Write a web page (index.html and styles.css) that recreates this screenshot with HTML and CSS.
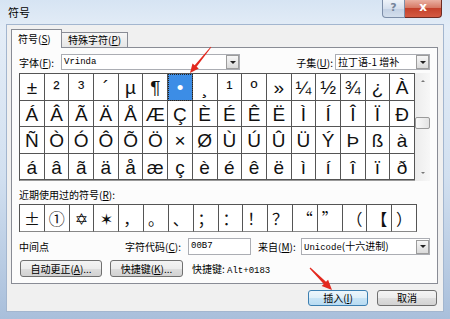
FILE: index.html
```html
<!DOCTYPE html>
<html>
<head>
  <meta charset="utf-8">
  <link rel="stylesheet" href="styles.css">
</head>
<body>
  <div class="window">
    <div class="titlebar">
      <span class="title">符号</span>
      <div class="caption-buttons">
        <span class="help-btn">?</span>
        <span class="close-btn">x</span>
      </div>
    </div>

    <div class="client">
      <div class="tabs">
        <div class="tab active">符号(<u>S</u>)</div>
        <div class="tab">特殊字符(<u>P</u>)</div>
      </div>

      <div class="panel">
        <div class="font-row">
          <span class="font-label">字体(<u>F</u>):</span>
          <div class="combo font-combo"><span class="combo-text mono">Vrinda</span><span class="drop"></span></div>
          <div class="spacer"></div>
          <span class="subset-label">子集(<u>U</u>):</span>
          <div class="combo subset-combo"><span class="combo-text">拉丁语-1 增补</span><span class="drop"></span></div>
        </div>

        <div class="symbols">
          <div class="symbol-grid">
            <div class="cell">±</div><div class="cell">²</div><div class="cell">³</div><div class="cell">´</div>
            <div class="cell">µ</div><div class="cell">¶</div><div class="cell selected">•</div><div class="cell">¸</div>
            <div class="cell">¹</div><div class="cell">º</div><div class="cell">»</div><div class="cell">¼</div>
            <div class="cell">½</div><div class="cell">¾</div><div class="cell">¿</div><div class="cell">À</div>

            <div class="cell">Á</div><div class="cell">Â</div><div class="cell">Ã</div><div class="cell">Ä</div>
            <div class="cell">Å</div><div class="cell">Æ</div><div class="cell">Ç</div><div class="cell">È</div>
            <div class="cell">É</div><div class="cell">Ê</div><div class="cell">Ë</div><div class="cell">Ì</div>
            <div class="cell">Í</div><div class="cell">Î</div><div class="cell">Ï</div><div class="cell">Ð</div>

            <div class="cell">Ñ</div><div class="cell">Ò</div><div class="cell">Ó</div><div class="cell">Ô</div>
            <div class="cell">Õ</div><div class="cell">Ö</div><div class="cell">×</div><div class="cell">Ø</div>
            <div class="cell">Ù</div><div class="cell">Ú</div><div class="cell">Û</div><div class="cell">Ü</div>
            <div class="cell">Ý</div><div class="cell">Þ</div><div class="cell">ß</div><div class="cell">à</div>

            <div class="cell">á</div><div class="cell">â</div><div class="cell">ã</div><div class="cell">ä</div>
            <div class="cell">å</div><div class="cell">æ</div><div class="cell">ç</div><div class="cell">è</div>
            <div class="cell">é</div><div class="cell">ê</div><div class="cell">ë</div><div class="cell">ì</div>
            <div class="cell">í</div><div class="cell">î</div><div class="cell">ï</div><div class="cell">ð</div>
          </div>
          <div class="scrollbar">
            <span class="scroll-arrow up"></span>
            <div class="scroll-track"><span class="scroll-thumb"></span></div>
            <span class="scroll-arrow down"></span>
          </div>
        </div>

        <div class="recent-label">近期使用过的符号(<u>R</u>):</div>
        <div class="recent-grid">
          <div class="rcell">±</div><div class="rcell">①</div><div class="rcell">✡</div><div class="rcell">✶</div>
          <div class="rcell">，</div><div class="rcell">。</div><div class="rcell">、</div><div class="rcell">；</div>
          <div class="rcell">：</div><div class="rcell">！</div><div class="rcell">？</div><div class="rcell">“</div>
          <div class="rcell">”</div><div class="rcell">（</div><div class="rcell">【</div><div class="rcell">）</div>
        </div>

        <div class="code-row">
          <span class="char-name">中间点</span>
          <span class="code-label">字符代码(<u>C</u>):</span>
          <div class="textbox mono">00B7</div>
          <span class="from-label">来自(<u>M</u>):</span>
          <div class="combo from-combo"><span class="combo-text"><span class="mono">Unicode</span>(十六进制)</span><span class="drop"></span></div>
        </div>

        <div class="button-row">
          <button class="btn autocorrect">自动更正(<u>A</u>)...</button>
          <button class="btn shortcut">快捷键(<u>K</u>)...</button>
          <span class="shortcut-text">快捷键: <span class="mono">Alt+0183</span></span>
        </div>
      </div>

      <div class="dialog-buttons">
        <button class="btn default">插入(<u>I</u>)</button>
        <button class="btn">取消</button>
      </div>
    </div>

    <svg class="arrows" width="450" height="319" viewBox="0 0 450 319">
      <polygon points="211.3,47.3 196.6,66.8 198.8,68.5 190,73 192.5,63.5 194.7,65.3 210.7,46.7" />
      <polygon points="309.6,268.4 323.8,284.0 321.7,286.1 332,290 328.1,279.7 326.0,281.8 310.4,267.6" />
    </svg>
  </div>
</body>
</html>
```

FILE: styles.css
```css
body {
  margin: 0;
  width: 450px;
  height: 319px;
  overflow: hidden;
  font-family: "Noto Sans CJK SC", sans-serif;
  font-size: 10px;
  color: #000;
}

u {
  text-decoration: underline;
}

.mono {
  font-family: "Liberation Mono", "Noto Sans CJK SC", monospace;
  font-size: 9px;
}

.window {
  position: relative;
  width: 450px;
  height: 319px;
  display: flex;
  flex-direction: column;
  background: linear-gradient(to bottom, #d6e4f3 0%, #e4edf7 9%, #d2e0f0 55%, #a9bfdb 100%);
}

.titlebar {
  height: 25px;
  display: flex;
  align-items: flex-start;
}

.title {
  padding-left: 8px;
  line-height: 24px;
  font-size: 11px;
}

.caption-buttons {
  margin-left: auto;
  margin-right: 8px;
  display: flex;
}

.help-btn {
  width: 23px;
  height: 18px;
  box-sizing: border-box;
  border: 1px solid #7d8ea8;
  border-top: none;
  border-radius: 0 0 0 4px;
  background: linear-gradient(#eef3f9, #d6e0ee 50%, #c3d1e4 51%, #d3deec);
  color: #75849a;
  font: bold 11px "DejaVu Sans", sans-serif;
  text-align: center;
  line-height: 16px;
}

.close-btn {
  width: 37px;
  height: 18px;
  box-sizing: border-box;
  border: 1px solid #6e2b23;
  border-top: none;
  border-left: none;
  border-radius: 0 0 4px 0;
  background: linear-gradient(#eab0a2, #d77a66 45%, #c4412b 50%, #d45a42);
  color: #fff;
  font: bold 12px "DejaVu Sans", sans-serif;
  text-align: center;
  line-height: 15px;
}

.client {
  margin: 0 7px;
  height: 286px;
  background: #f0f0f0;
  box-shadow: 0 0 0 1px #a3b6cf;
  display: flex;
  flex-direction: column;
}

/* tabs */
.tabs {
  display: flex;
  align-items: flex-end;
  height: 19px;
  margin-top: 4px;
  margin-bottom: -1px;
  padding-left: 4px;
  position: relative;
  z-index: 1;
}

.tab {
  box-sizing: border-box;
  height: 15px;
  margin-bottom: 1px;
  padding: 0 6px;
  border: 1px solid #898c95;
  border-bottom: none;
  border-left: none;
  background: linear-gradient(#f6f6f6, #e6e6e6);
  line-height: 14px;
  white-space: nowrap;
}

.tab.active {
  height: 19px;
  margin-bottom: 0;
  width: 51px;
  padding: 0 0 0 6px;
  border-left: 1px solid #898c95;
  background: #fcfcfc;
  line-height: 18px;
}

.panel {
  margin: 0 5px 0 4px;
  padding: 6px 7px;
  border: 1px solid #898c95;
  background: #fcfcfc;
}

/* font row */
.font-row {
  display: flex;
  align-items: center;
  height: 16px;
  margin-bottom: 3px;
}

.font-label {
  width: 42px;
}

.spacer {
  flex: 1;
}

.subset-label {
  margin-right: 2px;
}

.combo {
  box-sizing: border-box;
  height: 16px;
  display: flex;
  align-items: center;
  border: 1px solid #abadb3;
  background: #fff;
  padding-left: 2px;
}

.combo-text {
  flex: 1;
  white-space: nowrap;
  line-height: 14px;
}

.font-combo {
  width: 179px;
}

.subset-combo {
  width: 95px;
}

.from-combo {
  width: 129px;
  height: 17px;
}

.drop {
  width: 13px;
  height: 14px;
  box-sizing: border-box;
  border: 1px solid #9c9c9c;
  background: linear-gradient(#f7f7f7, #dadada);
  display: flex;
  align-items: center;
  justify-content: center;
}

.drop::after {
  content: "";
  border-top: 3px solid #222;
  border-left: 3px solid transparent;
  border-right: 3px solid transparent;
}

/* symbol grid */
.symbols {
  display: flex;
  height: 108px;
}

.symbol-grid {
  width: 396px;
  height: 108px;
  box-sizing: border-box;
  display: grid;
  grid-template-columns: repeat(16, 1fr);
  grid-template-rows: repeat(4, 1fr);
  border-top: 1px solid #555;
  border-left: 1px solid #555;
  border-bottom: 1px solid #9a9a9a;
  background: #fff;
}

.cell {
  box-sizing: border-box;
  border-right: 1px solid #555;
  border-bottom: 1px solid #555;
  padding-top: 2px;
  font-family: "Liberation Sans", sans-serif;
  font-size: 19px;
  line-height: 24px;
  text-align: center;
  color: #111;
  overflow: hidden;
}

.cell.selected {
  background: #3c8de6;
  color: #fff;
  outline: 1px dotted #222;
  outline-offset: -1px;
}

.scrollbar {
  width: 15px;
  display: flex;
  flex-direction: column;
  background: linear-gradient(to right, #ececec, #f7f7f7);
}

.scroll-arrow {
  height: 16px;
  display: flex;
  align-items: center;
  justify-content: center;
}

.scroll-arrow::after {
  content: "";
  border-left: 2px solid transparent;
  border-right: 2px solid transparent;
}

.scroll-arrow.up::after {
  border-bottom: 2px solid #777;
}

.scroll-arrow.down::after {
  border-top: 2px solid #777;
}

.scroll-track {
  flex: 1;
}

.scroll-thumb {
  display: block;
  height: 12px;
  margin-top: 28px;
  box-sizing: border-box;
  border: 1px solid #9a9a9a;
  border-radius: 2px;
  background: linear-gradient(to right, #fafafa, #e3e3e3);
}

/* recently used */
.recent-label {
  margin-top: 7px;
  line-height: 14px;
}

.recent-grid {
  margin-top: 2px;
  width: 398px;
  height: 28px;
  box-sizing: border-box;
  display: grid;
  grid-template-columns: repeat(16, 1fr);
  border-top: 1px solid #555;
  border-left: 1px solid #555;
  background: #fff;
}

.rcell {
  border-right: 1px solid #555;
  border-bottom: 1px solid #888;
  font-family: "Noto Sans CJK SC", "DejaVu Sans", sans-serif;
  font-size: 16px;
  line-height: 26px;
  text-align: center;
  color: #111;
  overflow: hidden;
}

/* code row */
.code-row {
  margin-top: 6px;
  height: 17px;
  display: flex;
  align-items: center;
}

.char-name {
  width: 106px;
}

.code-label {
  width: 63px;
}

.textbox {
  box-sizing: border-box;
  width: 63px;
  height: 17px;
  border: 1px solid #abadb3;
  background: #fff;
  padding-left: 2px;
  line-height: 15px;
}

.from-label {
  margin-left: 7px;
  width: 43px;
}

/* buttons */
.button-row {
  margin-top: 5px;
  height: 17px;
  display: flex;
  align-items: center;
}

.btn {
  box-sizing: border-box;
  height: 17px;
  margin: 0;
  padding: 0;
  border: 1px solid #707070;
  border-radius: 3px;
  background: linear-gradient(#f4f4f4, #ececec 50%, #dedede 51%, #d2d2d2);
  font-family: "Noto Sans CJK SC", sans-serif;
  font-size: 10px;
  line-height: 14px;
  color: #000;
}

.autocorrect {
  width: 82px;
  margin-left: 1px;
}

.shortcut {
  width: 73px;
  margin-left: 8px;
}

.shortcut-text {
  margin-left: 9px;
}

.dialog-buttons {
  display: flex;
  justify-content: flex-end;
  gap: 9px;
  margin-top: 6px;
  padding-right: 6px;
}

.dialog-buttons .btn {
  width: 60px;
  height: 16px;
}

.btn.default {
  border-color: #3c7fb1;
  background: linear-gradient(#edf6fc, #dfeff9 50%, #c8e4f6 51%, #b8dbf2);
}

/* red pointer arrows drawn over the dialog */
.arrows {
  position: absolute;
  left: 0;
  top: 0;
  pointer-events: none;
}

.arrows polygon {
  fill: #e3291f;
}
```
